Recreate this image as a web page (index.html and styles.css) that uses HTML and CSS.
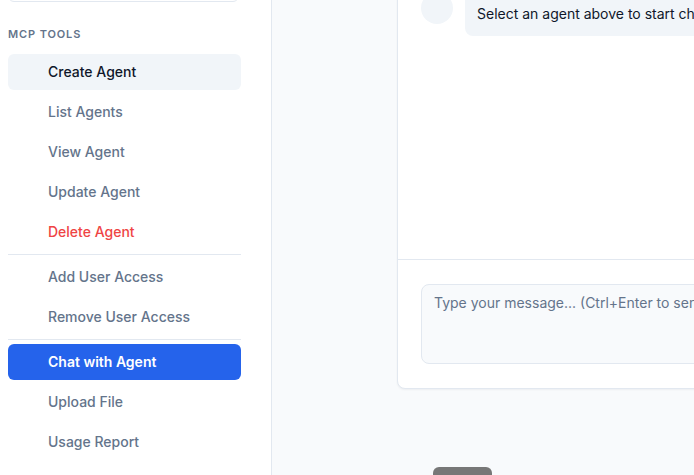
FILE: index.html
```html
<!DOCTYPE html>
<html>
<head>
<meta charset="utf-8">
<link rel="stylesheet" href="styles.css">
</head>
<body>
<aside class="sidebar">
  <div class="select-box"></div>
  <div class="section-label">MCP Tools</div>
  <nav class="nav">
    <div class="nav-item hover">Create Agent</div>
    <div class="nav-item">List Agents</div>
    <div class="nav-item">View Agent</div>
    <div class="nav-item">Update Agent</div>
    <div class="nav-item danger">Delete Agent</div>
    <div class="divider"></div>
    <div class="nav-item">Add User Access</div>
    <div class="nav-item">Remove User Access</div>
    <div class="divider"></div>
    <div class="nav-item active">Chat with Agent</div>
    <div class="nav-item">Upload File</div>
    <div class="nav-item">Usage Report</div>
  </nav>
</aside>
<main class="main">
  <section class="chat-card">
    <div class="messages">
      <div class="message">
        <div class="avatar"></div>
        <div class="bubble">Select an agent above to start chatting with it.</div>
      </div>
    </div>
    <div class="composer">
      <div class="textarea">Type your message... (Ctrl+Enter to send)</div>
    </div>
  </section>
  <div class="action-btn"></div>
</main>
</body>
</html>
```

FILE: styles.css
```css
* { box-sizing: border-box; }
html, body {
  margin: 0;
  height: 475px;
  overflow: hidden;
}
body {
  display: flex;
  font-family: Inter, "Liberation Sans", sans-serif;
  background: #f8fafc;
  color: #0f172a;
}
.sidebar {
  width: 272px;
  flex: 0 0 272px;
  background: #ffffff;
  border-right: 1px solid #e2e8f0;
  padding: 0 30px 0 8px;
  display: flex;
  flex-direction: column;
}
.select-box {
  margin-top: -30px;
  height: 32px;
  width: 231px;
  border: 1px solid #e2e8f0;
  border-radius: 6px;
  background: #fff;
}
.section-label {
  margin-top: 24px;
  font-size: 11px;
  line-height: 16px;
  font-weight: 600;
  letter-spacing: 0.08em;
  text-transform: uppercase;
  color: #64748b;
}
.nav {
  margin-top: 12px;
  display: flex;
  flex-direction: column;
  gap: 4px;
}
.nav-item {
  height: 36px;
  border-radius: 6px;
  padding-left: 40px;
  padding-bottom: 1px;
  display: flex;
  align-items: center;
  font-size: 14px;
  font-weight: 500;
  color: #64748b;
}
.nav-item.hover {
  background: #f1f5f9;
  color: #0f172a;
}
.nav-item.danger { color: #ef4444; }
.nav-item.active {
  background: #2563eb;
  color: #ffffff;
  font-weight: 600;
}
.divider {
  height: 1px;
  background: #e2e8f0;
}
.main {
  flex: 1;
  min-width: 0;
  padding-left: 125px;
  display: flex;
  flex-direction: column;
  align-items: flex-start;
}
.chat-card {
  margin-top: -33px;
  width: 640px;
  flex: 0 0 auto;
  background: #ffffff;
  border: 1px solid #e2e8f0;
  border-radius: 8px;
  box-shadow: 0 1px 2px rgba(15, 23, 42, 0.05);
}
.messages {
  height: 291px;
  padding: 24px 23px;
}
.message {
  display: flex;
  gap: 12px;
  align-items: flex-start;
}
.avatar {
  width: 32px;
  height: 32px;
  border-radius: 50%;
  background: #f1f5f9;
  flex: 0 0 32px;
}
.bubble {
  background: #f1f5f9;
  border-radius: 8px;
  padding: 12px;
  font-size: 14px;
  line-height: 20px;
  color: #0f172a;
  white-space: nowrap;
}
.composer {
  border-top: 1px solid #e2e8f0;
  padding: 24px 23px;
}
.textarea {
  height: 80px;
  border: 1px solid #e2e8f0;
  border-radius: 8px;
  background: #f8fafc;
  padding: 8px 12px;
  font-size: 14px;
  line-height: 20px;
  color: #64748b;
  white-space: nowrap;
  overflow: hidden;
}
.action-btn {
  margin-top: 78px;
  margin-left: 36px;
  width: 59px;
  height: 36px;
  border-radius: 6px;
  background: #777777;
  flex: 0 0 auto;
}
```
